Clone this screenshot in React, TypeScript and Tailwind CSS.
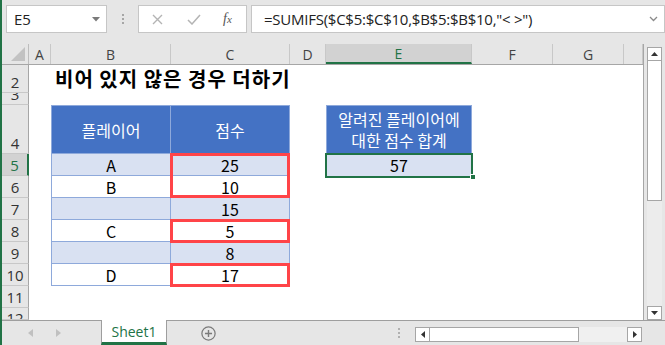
import React from "react";

const cols = [
  { l: "A", w: 22 },
  { l: "B", w: 120 },
  { l: "C", w: 119 },
  { l: "D", w: 36 },
  { l: "E", w: 146 },
  { l: "F", w: 81 },
  { l: "G", w: 71 },
  { l: "", w: 19 },
];

type Row = { n: number; h: number };
const rows: Row[] = [
  { n: 2, h: 28 },
  { n: 3, h: 12 },
  { n: 4, h: 49 },
  { n: 5, h: 22 },
  { n: 6, h: 22 },
  { n: 7, h: 22 },
  { n: 8, h: 22 },
  { n: 9, h: 22 },
  { n: 10, h: 22 },
  { n: 11, h: 22 },
  { n: 12, h: 12 },
];

const table: Record<number, [string, string]> = {
  5: ["A", "25"],
  6: ["B", "10"],
  7: ["", "15"],
  8: ["C", "5"],
  9: ["", "8"],
  10: ["D", "17"],
};

const KR = "font-['Noto_Sans_CJK_KR','Noto_Sans',sans-serif]";

function Cell({ r, ci }: { r: number; ci: number }) {
  const w = cols[ci].w;
  const col = cols[ci].l;
  let cls = "shrink-0 h-full flex items-center justify-center text-[16px] text-black";
  let content: React.ReactNode = null;

  if (r === 2 && col === "B") {
    cls = "shrink-0 h-full flex items-center justify-start pl-[4px] overflow-visible whitespace-nowrap";
    content = (
      <span className="text-[20px] font-bold text-black tracking-[1px] leading-none">
        비어 있지 않은 경우 더하기
      </span>
    );
  } else if (r === 4 && (col === "B" || col === "C")) {
    cls +=
      " bg-[#4472c4] text-white border-t border-b border-[#8ea9db]" +
      (col === "B" ? " border-l border-r" : " border-r");
    content = col === "B" ? "플레이어" : "점수";
  } else if (r === 4 && col === "E") {
    cls += " bg-[#4472c4] text-white border border-[#8ea9db] flex-col leading-[21px] pt-[1px]";
    content = (
      <>
        <span>알려진 플레이어에</span>
        <span>대한 점수 합계</span>
      </>
    );
  } else if (r === 5 && col === "E") {
    cls += " bg-[#d9e1f2]";
    content = "57";
  } else if (table[r] && (col === "B" || col === "C")) {
    const fill = r % 2 === 1 ? " bg-[#d9e1f2]" : " bg-white";
    cls += fill + " border-b border-[#8ea9db]" + (col === "B" ? " border-l border-r" : " border-r");
    content = col === "B" ? table[r][0] : table[r][1];
  }

  return (
    <div className={cls} style={{ width: w }}>
      {content}
    </div>
  );
}

export default function App() {
  return (
    <div className={`relative w-[665px] h-[345px] overflow-hidden bg-[#e6e6e6] flex ${KR}`}>
      {/* green left edge */}
      <div className="w-[2px] h-full bg-[#217346] shrink-0" />

      <div className="flex flex-col w-[663px] h-full">
        {/* formula bar */}
        <div className="h-[44px] shrink-0 flex items-start pt-[5px] pl-[4px]">
          <div className="w-[101px] h-[28px] bg-white border border-[#c6c6c6] flex items-center justify-between pl-[7px] pr-[6px]">
            <span className="text-[15px] text-[#222] font-['Open_Sans',sans-serif]">E5</span>
            <svg width="8" height="5" viewBox="0 0 8 5">
              <path d="M0 0 L8 0 L4 4.5 Z" fill="#7a7a7a" />
            </svg>
          </div>
          <div className="w-[31px] h-[28px] flex flex-col items-center justify-center gap-[2px]">
            <div className="w-[2px] h-[2px] bg-[#a6a6a6]" />
            <div className="w-[2px] h-[2px] bg-[#a6a6a6]" />
            <div className="w-[2px] h-[2px] bg-[#a6a6a6]" />
          </div>
          <div className="w-[109px] h-[28px] bg-white border border-[#c6c6c6] flex items-center">
            <svg className="ml-[13px]" width="11" height="11" viewBox="0 0 11 11">
              <path d="M1 1 L10 10 M10 1 L1 10" stroke="#b4b4b4" strokeWidth="1.4" />
            </svg>
            <svg className="ml-[24px]" width="14" height="11" viewBox="0 0 14 11">
              <path d="M1 6 L5 10 L13 1" stroke="#b4b4b4" strokeWidth="1.5" fill="none" />
            </svg>
            <span className="ml-[22px] text-[14px] italic text-[#555] font-['Liberation_Serif',serif] leading-none">
              f<span className="text-[11px]">x</span>
            </span>
          </div>
          <div className="ml-[4px] flex-1 h-[28px] bg-white border border-[#c6c6c6] flex items-center justify-between pl-[12px] pr-[6px]">
            <span className="text-[15px] text-[#222] font-['Open_Sans',sans-serif] whitespace-nowrap tracking-[-0.25px]">
              =SUMIFS($C$5:$C$10,$B$5:$B$10,"&lt; &gt;")
            </span>
            <svg width="9" height="6" viewBox="0 0 9 6">
              <path d="M1 1 L4.5 4.5 L8 1" stroke="#8a8a8a" strokeWidth="1.3" fill="none" />
            </svg>
          </div>
        </div>

        {/* sheet */}
        <div className="flex h-[276px] shrink-0">
          <div className="w-[642px] h-full flex flex-col border-r border-[#a6a6a6] bg-white">
            {/* column headers */}
            <div className="h-[21px] flex shrink-0 bg-[#e6e6e6] border-b border-[#a6a6a6] text-[14px] text-[#444] font-['Open_Sans',sans-serif]">
              <div className="w-[27px] h-full shrink-0 border-r border-[#bdbdbd] relative">
                <svg className="absolute right-[3px] bottom-[3px]" width="14" height="14" viewBox="0 0 14 14">
                  <path d="M14 0 L14 14 L0 14 Z" fill="#c2c2c2" />
                </svg>
              </div>
              {cols.map((c) => (
                <div
                  key={c.l || "x"}
                  className={
                    "shrink-0 h-full flex items-center justify-center border-r border-[#c8c8c8] " +
                    (c.l === "E"
                      ? "bg-[#d2d2d2] text-[#217346] border-b-2 border-b-[#217346]"
                      : "")
                  }
                  style={{ width: c.w }}
                >
                  {c.l}
                </div>
              ))}
            </div>
            {/* rows */}
            {rows.map((r) => (
              <div key={r.n} className="flex shrink-0 overflow-visible" style={{ height: r.h }}>
                <div
                  className={
                    "w-[27px] h-full shrink-0 flex items-end justify-center overflow-hidden border-b border-[#c8c8c8] text-[15px] leading-[20px] font-['Open_Sans',sans-serif] " +
                    (r.n === 5
                      ? "bg-[#d2d2d2] text-[#217346] border-r-2 border-r-[#217346]"
                      : "bg-[#e6e6e6] text-[#333] border-r border-r-[#a6a6a6]") +
                    (r.n === 12 ? " items-start" : "")
                  }
                >
                  {r.n}
                </div>
                {cols.map((_, ci) => (
                  <Cell key={ci} r={r.n} ci={ci} />
                ))}
              </div>
            ))}
          </div>
          {/* vertical scrollbar */}
          <div className="ml-[3px] w-[15px] h-full flex flex-col pt-[3px] bg-[#e6e6e6]">
            <div className="h-[14px] bg-white border border-[#a6a6a6] flex items-center justify-center shrink-0">
              <svg width="7" height="4" viewBox="0 0 7 4">
                <path d="M0 4 L3.5 0 L7 4 Z" fill="#333" />
              </svg>
            </div>
            <div className="h-[140px] bg-white border border-t-0 border-[#a6a6a6] shrink-0" />
            <div className="flex-1 bg-[#ececec]" />
            <div className="h-[14px] bg-white border border-[#a6a6a6] flex items-center justify-center shrink-0">
              <svg width="7" height="4" viewBox="0 0 7 4">
                <path d="M0 0 L7 0 L3.5 4 Z" fill="#333" />
              </svg>
            </div>
          </div>
        </div>

        {/* bottom bar */}
        <div className="h-[25px] shrink-0 flex items-stretch border-t border-[#9e9e9e] bg-[#e6e6e6]">
          <div className="w-[99px] flex items-center shrink-0">
            <svg className="ml-[26px]" width="5" height="8" viewBox="0 0 5 8">
              <path d="M5 0 L0 4 L5 8 Z" fill="#c0c0c0" />
            </svg>
            <svg className="ml-[23px]" width="5" height="8" viewBox="0 0 5 8">
              <path d="M0 0 L5 4 L0 8 Z" fill="#c0c0c0" />
            </svg>
          </div>
          <div className="-mt-px w-[66px] shrink-0 bg-white border-l border-r border-[#9e9e9e] border-b-[3px] border-b-[#217346] flex items-center justify-center text-[14px] text-[#217346] font-['Open_Sans',sans-serif]">
            Sheet1
          </div>
          <div className="w-[233px] flex items-center shrink-0">
            <svg className="ml-[34px]" width="17" height="17" viewBox="0 0 17 17">
              <circle cx="8.5" cy="8.5" r="7.5" stroke="#7a7a7a" strokeWidth="1.4" fill="none" />
              <path d="M8.5 4.5 V12.5 M4.5 8.5 H12.5" stroke="#7a7a7a" strokeWidth="1.6" />
            </svg>
            <div className="ml-[182px] flex flex-col gap-[2px]">
              <div className="w-[2px] h-[2px] bg-[#b0b0b0]" />
              <div className="w-[2px] h-[2px] bg-[#b0b0b0]" />
              <div className="w-[2px] h-[2px] bg-[#b0b0b0]" />
            </div>
          </div>
          <div className="ml-[15px] w-[227px] h-[15px] mt-[6px] flex shrink-0">
            <div className="w-[15px] h-full bg-white border border-[#a6a6a6] flex items-center justify-center">
              <svg width="4" height="7" viewBox="0 0 4 7">
                <path d="M4 0 L0 3.5 L4 7 Z" fill="#333" />
              </svg>
            </div>
            <div className="w-[149px] h-full bg-white border border-l-0 border-[#a6a6a6]" />
            <div className="flex-1 h-full bg-[#f0f0f0]" />
            <div className="w-[15px] h-full bg-white border border-[#a6a6a6] flex items-center justify-center">
              <svg width="4" height="7" viewBox="0 0 4 7">
                <path d="M0 0 L4 3.5 L0 7 Z" fill="#333" />
              </svg>
            </div>
          </div>
        </div>
      </div>

      {/* red highlight boxes */}
      <div className="absolute left-[170px] top-[153px] w-[120px] h-[45px] border-[3px] border-[#ff4448]" />
      <div className="absolute left-[170px] top-[219px] w-[120px] h-[24px] border-[3px] border-[#ff4448]" />
      <div className="absolute left-[170px] top-[263px] w-[120px] h-[24px] border-[3px] border-[#ff4448]" />

      {/* E5 selection */}
      <div className="absolute left-[325px] top-[153px] w-[148px] h-[25px] border-2 border-[#217346]" />
      <div className="absolute left-[470px] top-[174px] w-[6px] h-[6px] bg-[#217346] border border-white" />
    </div>
  );
}
